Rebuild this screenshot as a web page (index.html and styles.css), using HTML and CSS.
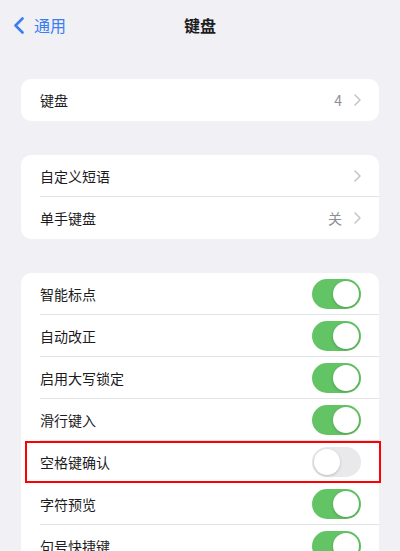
FILE: index.html
```html
<!DOCTYPE html>
<html lang="zh-CN">
<head>
    <meta charset="UTF-8">
    <meta name="viewport" content="width=device-width, initial-scale=1.0">
    <title>键盘</title>
    <link rel="stylesheet" href="styles.css">
</head>
<body>
    <div class="navbar">
        <a class="back" href="#">
            <svg width="12" height="17" viewBox="0 0 12 17"><path d="M9.5 1.5 L2.5 8.5 L9.5 15.5" fill="none" stroke="#3a7ff0" stroke-width="2.6" stroke-linecap="round" stroke-linejoin="round"/></svg>
            <span>通用</span>
        </a>
        <h1>键盘</h1>
        <div></div>
    </div>

    <div class="group">
        <div class="row">
            <div class="row-inner">
                <span class="label">键盘</span>
                <span class="value">4</span>
                <svg class="chev" width="7" height="12" viewBox="0 0 7 12"><path d="M1 1 L6 6 L1 11" fill="none" stroke="#c4c4c8" stroke-width="1.5" stroke-linecap="round" stroke-linejoin="round"/></svg>
            </div>
        </div>
    </div>

    <div class="group">
        <div class="row">
            <div class="row-inner">
                <span class="label">自定义短语</span>
                <svg class="chev" width="7" height="12" viewBox="0 0 7 12"><path d="M1 1 L6 6 L1 11" fill="none" stroke="#c4c4c8" stroke-width="1.5" stroke-linecap="round" stroke-linejoin="round"/></svg>
            </div>
        </div>
        <div class="row">
            <div class="row-inner">
                <span class="label">单手键盘</span>
                <span class="value">关</span>
                <svg class="chev" width="7" height="12" viewBox="0 0 7 12"><path d="M1 1 L6 6 L1 11" fill="none" stroke="#c4c4c8" stroke-width="1.5" stroke-linecap="round" stroke-linejoin="round"/></svg>
            </div>
        </div>
    </div>

    <div class="group">
        <div class="row">
            <div class="row-inner">
                <span class="label">智能标点</span>
                <span class="switch on"><span class="knob"></span></span>
            </div>
        </div>
        <div class="row">
            <div class="row-inner">
                <span class="label">自动改正</span>
                <span class="switch on"><span class="knob"></span></span>
            </div>
        </div>
        <div class="row">
            <div class="row-inner">
                <span class="label">启用大写锁定</span>
                <span class="switch on"><span class="knob"></span></span>
            </div>
        </div>
        <div class="row">
            <div class="row-inner">
                <span class="label">滑行键入</span>
                <span class="switch on"><span class="knob"></span></span>
            </div>
        </div>
        <div class="row marked">
            <div class="row-inner">
                <span class="label">空格键确认</span>
                <span class="switch"><span class="knob"></span></span>
            </div>
            <div class="highlight"></div>
        </div>
        <div class="row">
            <div class="row-inner">
                <span class="label">字符预览</span>
                <span class="switch on"><span class="knob"></span></span>
            </div>
        </div>
        <div class="row">
            <div class="row-inner">
                <span class="label">句号快捷键</span>
                <span class="switch on"><span class="knob"></span></span>
            </div>
        </div>
    </div>
</body>
</html>
```

FILE: styles.css
```css
body {
    font-family: "Noto Sans CJK SC", "Noto Sans", sans-serif;
    margin: 0;
    padding: 0;
    background: #f0f0f5;
    color: #1c1c1e;
    height: 551px;
    overflow: hidden;
}
.navbar {
    height: 50px;
    display: grid;
    grid-template-columns: 1fr auto 1fr;
    align-items: center;
}
.back {
    display: flex;
    align-items: center;
    gap: 9px;
    padding-left: 13px;
    color: #3a7ff0;
    text-decoration: none;
    font-size: 16px;
}
.navbar h1 {
    margin: 0;
    font-size: 16px;
    font-weight: bold;
}

.group {
    background: white;
    border-radius: 10px;
    margin: 29px 21px 0;
}
.group + .group {
    margin-top: 34px;
}
.row {
    position: relative;
    padding-left: 19px;
}
.row-inner {
    height: 42px;
    box-sizing: border-box;
    display: flex;
    align-items: center;
    padding-right: 18px;
    border-bottom: 1px solid #e3e3e6;
}
.row:last-child .row-inner,
.marked .row-inner {
    border-bottom: none;
}
.label {
    flex: 1;
    font-size: 14px;
}
.value {
    font-size: 14px;
    color: #8e8e93;
    margin-right: 12px;
}
.switch {
    width: 49px;
    height: 30px;
    border-radius: 15px;
    background: #e9e9eb;
    position: relative;
}
.switch.on {
    background: #62c464;
}
.knob {
    position: absolute;
    top: 2px;
    left: 2px;
    width: 26px;
    height: 26px;
    border-radius: 50%;
    background: white;
    box-shadow: 0 1px 3px rgba(0, 0, 0, 0.2);
}
.switch.on .knob {
    left: 21px;
}
.highlight {
    position: absolute;
    top: 0;
    bottom: 0;
    left: 4px;
    right: -2px;
    border: 2px solid #ff0000;
}
```
